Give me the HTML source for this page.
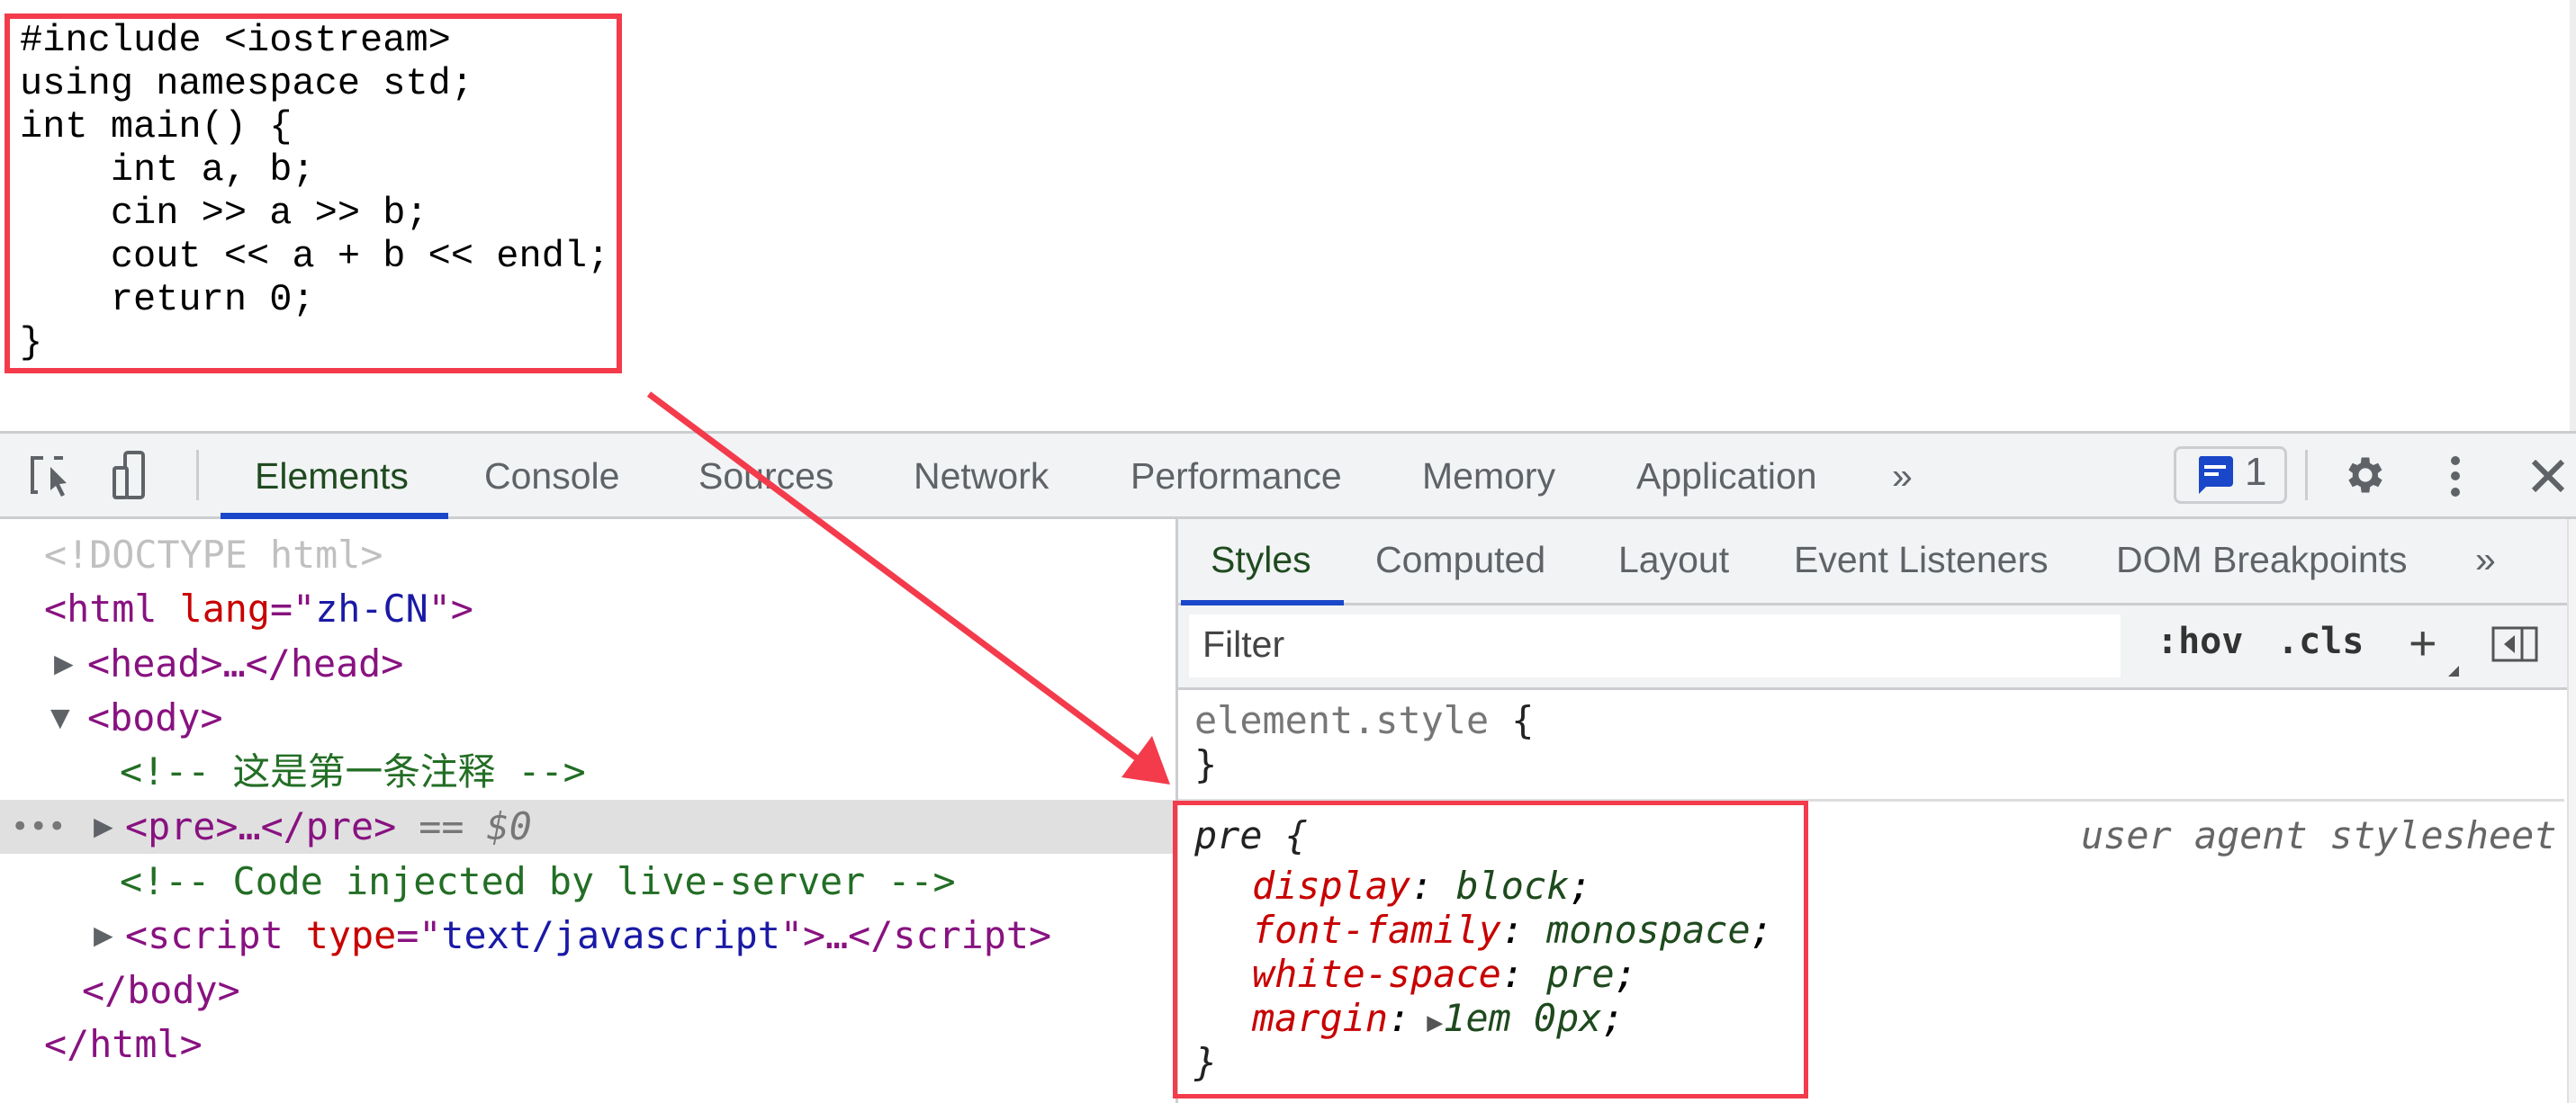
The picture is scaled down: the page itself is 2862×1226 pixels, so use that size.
<!DOCTYPE html>
<html><head><meta charset="utf-8"><style>
*{margin:0;padding:0;box-sizing:border-box}
body{width:2862px;height:1226px;position:relative;background:#fff;overflow:hidden;font-family:"Liberation Sans",sans-serif}
.a{position:absolute;white-space:pre}
.code{font-family:"Liberation Mono",monospace;font-size:42px;line-height:48px;color:#000;left:22px;top:21px;}
.mono{font-family:"DejaVu Sans Mono","Noto Sans CJK SC",monospace;font-size:41.7px;line-height:60px}
.tab{font-size:41px;color:#5f6368;top:503px;line-height:52px}
.stab{font-size:41px;color:#5f6368;top:596px;line-height:52px}
.tg{color:#881280}.an{color:#c80000}.av{color:#1a1aa6}.cm{color:#236e25}
.it{font-family:"DejaVu Sans Mono",monospace;font-style:italic;font-size:41.8px;line-height:49px}
.pn{color:#c80000}.pv{color:#1e4a1e}
.tri{color:#5f6368;font-size:36px}
</style></head><body>
<div class="a" style="left:5px;top:15px;width:686px;height:400px;border:6px solid #f33b4c"></div>
<div class="a code">#include &lt;iostream&gt;
using namespace std;
int main() {
    int a, b;
    cin &gt;&gt; a &gt;&gt; b;
    cout &lt;&lt; a + b &lt;&lt; endl;
    return 0;
}</div>
<div class="a" style="left:2855px;top:0;width:7px;height:480px;background:#eee"></div>

<div class="a" style="left:0;top:479px;width:2862px;height:98px;background:#f1f3f4;border-top:3px solid #cbcdd1;border-bottom:3px solid #cbcdd1"></div>
<svg class="a" style="left:30px;top:505px" width="60" height="50" viewBox="0 0 60 50"><path d="M18 4H6v38h6" fill="none" stroke="#5f6368" stroke-width="4"/><path d="M26 14l18 18-8 1 6 12-4 2-6-12-6 5z" fill="#5f6368"/><path d="M30 4h10" stroke="#5f6368" stroke-width="4"/></svg>
<svg class="a" style="left:124px;top:500px" width="60" height="58" viewBox="0 0 60 58"><rect x="15" y="3" width="20" height="50" rx="3" fill="none" stroke="#5f6368" stroke-width="4"/><rect x="3" y="20" width="14" height="33" rx="2" fill="#f1f3f4" stroke="#5f6368" stroke-width="4"/></svg>
<div class="a" style="left:218px;top:500px;width:3px;height:56px;background:#cbcdd1"></div>
<div class="a tab" style="left:283px;color:#1f4a1f">Elements</div>
<div class="a" style="left:245px;top:570px;width:253px;height:7px;background:#1a47c9"></div>
<div class="a tab" style="left:538px">Console</div>
<div class="a tab" style="left:776px">Sources</div>
<div class="a tab" style="left:1015px">Network</div>
<div class="a tab" style="left:1256px">Performance</div>
<div class="a tab" style="left:1580px">Memory</div>
<div class="a tab" style="left:1818px">Application</div>
<div class="a tab" style="left:2102px">»</div>
<div class="a" style="left:2415px;top:496px;width:126px;height:64px;border:3px solid #cbcdd1;border-radius:8px"></div>
<svg class="a" style="left:2441px;top:507px" width="40" height="42" viewBox="0 0 40 42"><path d="M4 0h32a4 4 0 0 1 4 4v26a4 4 0 0 1-4 4H10L2 42V4a4 4 0 0 1 2-4z" fill="#1a47c9"/><rect x="8" y="10" width="24" height="4" fill="#fff"/><rect x="8" y="18" width="16" height="4" fill="#fff"/></svg>
<div class="a" style="left:2494px;top:500px;font-size:44px;color:#5f6368">1</div>
<div class="a" style="left:2561px;top:500px;width:3px;height:56px;background:#cbcdd1"></div>
<svg class="a" style="left:2602px;top:502px" width="52" height="52" viewBox="0 0 24 24"><path fill="#5f6368" d="M19.4 13a7.5 7.5 0 0 0 0-2l2.1-1.6-2-3.5-2.5 1a7.3 7.3 0 0 0-1.7-1L15 3h-4l-.4 2.9a7.3 7.3 0 0 0-1.7 1l-2.5-1-2 3.5L6.5 11a7.5 7.5 0 0 0 0 2l-2.1 1.6 2 3.5 2.5-1a7.3 7.3 0 0 0 1.7 1L11 21h4l.4-2.9a7.3 7.3 0 0 0 1.7-1l2.5 1 2-3.5zM13 15.5a3.5 3.5 0 1 1 0-7 3.5 3.5 0 0 1 0 7z" transform="translate(-1 0)"/></svg>
<svg class="a" style="left:2718px;top:502px" width="20" height="54"><circle cx="10" cy="10" r="5" fill="#5f6368"/><circle cx="10" cy="27" r="5" fill="#5f6368"/><circle cx="10" cy="45" r="5" fill="#5f6368"/></svg>
<svg class="a" style="left:2812px;top:510px" width="38" height="38"><path d="M3 3L35 35M35 3L3 35" stroke="#5f6368" stroke-width="6"/></svg>

<div class="a" style="left:0;top:889px;width:1306px;height:60px;background:#e0e0e0"></div>
<div class="a mono" style="left:12px;top:889px;color:#777;font-size:34px">•••</div>
<div class="a mono" style="left:49px;top:587px;color:#c0c0c0">&lt;!DOCTYPE html&gt;</div>
<div class="a mono" style="left:49px;top:647px"><span class="tg">&lt;html </span><span class="an">lang</span><span class="tg">="</span><span class="av">zh-CN</span><span class="tg">"&gt;</span></div>
<div class="a mono tri" style="left:60px;top:708px">▶</div>
<div class="a mono tg" style="left:97px;top:708px">&lt;head&gt;…&lt;/head&gt;</div>
<div class="a mono tri" style="left:56px;top:768px">▼</div>
<div class="a mono tg" style="left:97px;top:768px">&lt;body&gt;</div>
<div class="a mono cm" style="left:133px;top:828px">&lt;!-- 这是第一条注释 --&gt;</div>
<div class="a mono tri" style="left:104px;top:889px">▶</div>
<div class="a mono" style="left:139px;top:889px"><span class="tg">&lt;pre&gt;…&lt;/pre&gt;</span><span style="color:#777"> == <i>$0</i></span></div>
<div class="a mono cm" style="left:133px;top:950px">&lt;!-- Code injected by live-server --&gt;</div>
<div class="a mono tri" style="left:104px;top:1010px">▶</div>
<div class="a mono" style="left:139px;top:1010px"><span class="tg">&lt;script </span><span class="an">type</span><span class="tg">="</span><span class="av">text/javascript</span><span class="tg">"&gt;…&lt;/script&gt;</span></div>
<div class="a mono tg" style="left:91px;top:1071px">&lt;/body&gt;</div>
<div class="a mono tg" style="left:49px;top:1131px">&lt;/html&gt;</div>

<div class="a" style="left:1306px;top:577px;width:3px;height:649px;background:#cbcdd1"></div>
<div class="a" style="left:1309px;top:577px;width:1553px;height:190px;background:#f1f3f4;border-bottom:3px solid #cbcdd1"></div>
<div class="a" style="left:1309px;top:670px;width:1553px;height:3px;background:#cbcdd1"></div>
<div class="a stab" style="left:1345px;color:#1f4a1f">Styles</div>
<div class="a" style="left:1312px;top:667px;width:181px;height:6px;background:#1a47c9"></div>
<div class="a stab" style="left:1528px">Computed</div>
<div class="a stab" style="left:1798px">Layout</div>
<div class="a stab" style="left:1993px">Event Listeners</div>
<div class="a stab" style="left:2351px">DOM Breakpoints</div>
<div class="a stab" style="left:2750px">»</div>
<div class="a" style="left:1321px;top:683px;width:1035px;height:70px;background:#fff"></div>
<div class="a" style="left:1336px;top:693px;font-size:41px;color:#444">Filter</div>
<div class="a" style="left:2396px;top:690px;font-family:'DejaVu Sans Mono',monospace;font-weight:bold;font-size:40px;color:#333">:hov</div>
<div class="a" style="left:2530px;top:690px;font-family:'DejaVu Sans Mono',monospace;font-weight:bold;font-size:40px;color:#333">.cls</div>
<div class="a" style="left:2676px;top:684px;font-size:54px;color:#444">+</div>
<svg class="a" style="left:2720px;top:740px" width="12" height="12"><path d="M12 0V12H0z" fill="#555"/></svg>
<svg class="a" style="left:2768px;top:696px" width="52" height="40"><rect x="2" y="2" width="48" height="36" fill="none" stroke="#555" stroke-width="3"/><path d="M34 2v36" stroke="#555" stroke-width="3"/><path d="M26 10v20L14 20z" fill="#555"/></svg>
<div class="a it" style="left:1327px;top:776px;font-style:normal;color:#777">element.style <span style="color:#222">{</span></div>
<div class="a it" style="left:1327px;top:825px;font-style:normal;color:#222">}</div>
<div class="a" style="left:1309px;top:888px;width:1540px;height:3px;background:#ddd"></div>
<div class="a it" style="left:1327px;top:904px;color:#222">pre {</div>
<div class="a it" style="left:2312px;top:904px;color:#666">user agent stylesheet</div>
<div class="a it" style="left:1391px;top:960px"><span class="pn">display</span>: <span class="pv">block</span>;</div>
<div class="a it" style="left:1391px;top:1009px"><span class="pn">font-family</span>: <span class="pv">monospace</span>;</div>
<div class="a it" style="left:1391px;top:1058px"><span class="pn">white-space</span>: <span class="pv">pre</span>;</div>
<div class="a it" style="left:1391px;top:1107px"><span class="pn">margin</span>:<span style="font-style:normal;color:#555;font-size:30px"> ▶</span><span class="pv">1em 0px</span>;</div>
<div class="a it" style="left:1327px;top:1156px;color:#222">}</div>
<div class="a" style="left:1303px;top:890px;width:706px;height:331px;border:5px solid #f33b4c"></div>
<div class="a" style="left:2852px;top:577px;width:10px;height:649px;background:#f4f4f4;border-left:2px solid #e0e0e0"></div>

<svg class="a" style="left:0;top:0" width="2862" height="1226"><line x1="721" y1="438" x2="1270" y2="848" stroke="#f33b4c" stroke-width="7"/><path d="M1300 872L1246 864L1280 818z" fill="#f33b4c"/></svg>
</body></html>
